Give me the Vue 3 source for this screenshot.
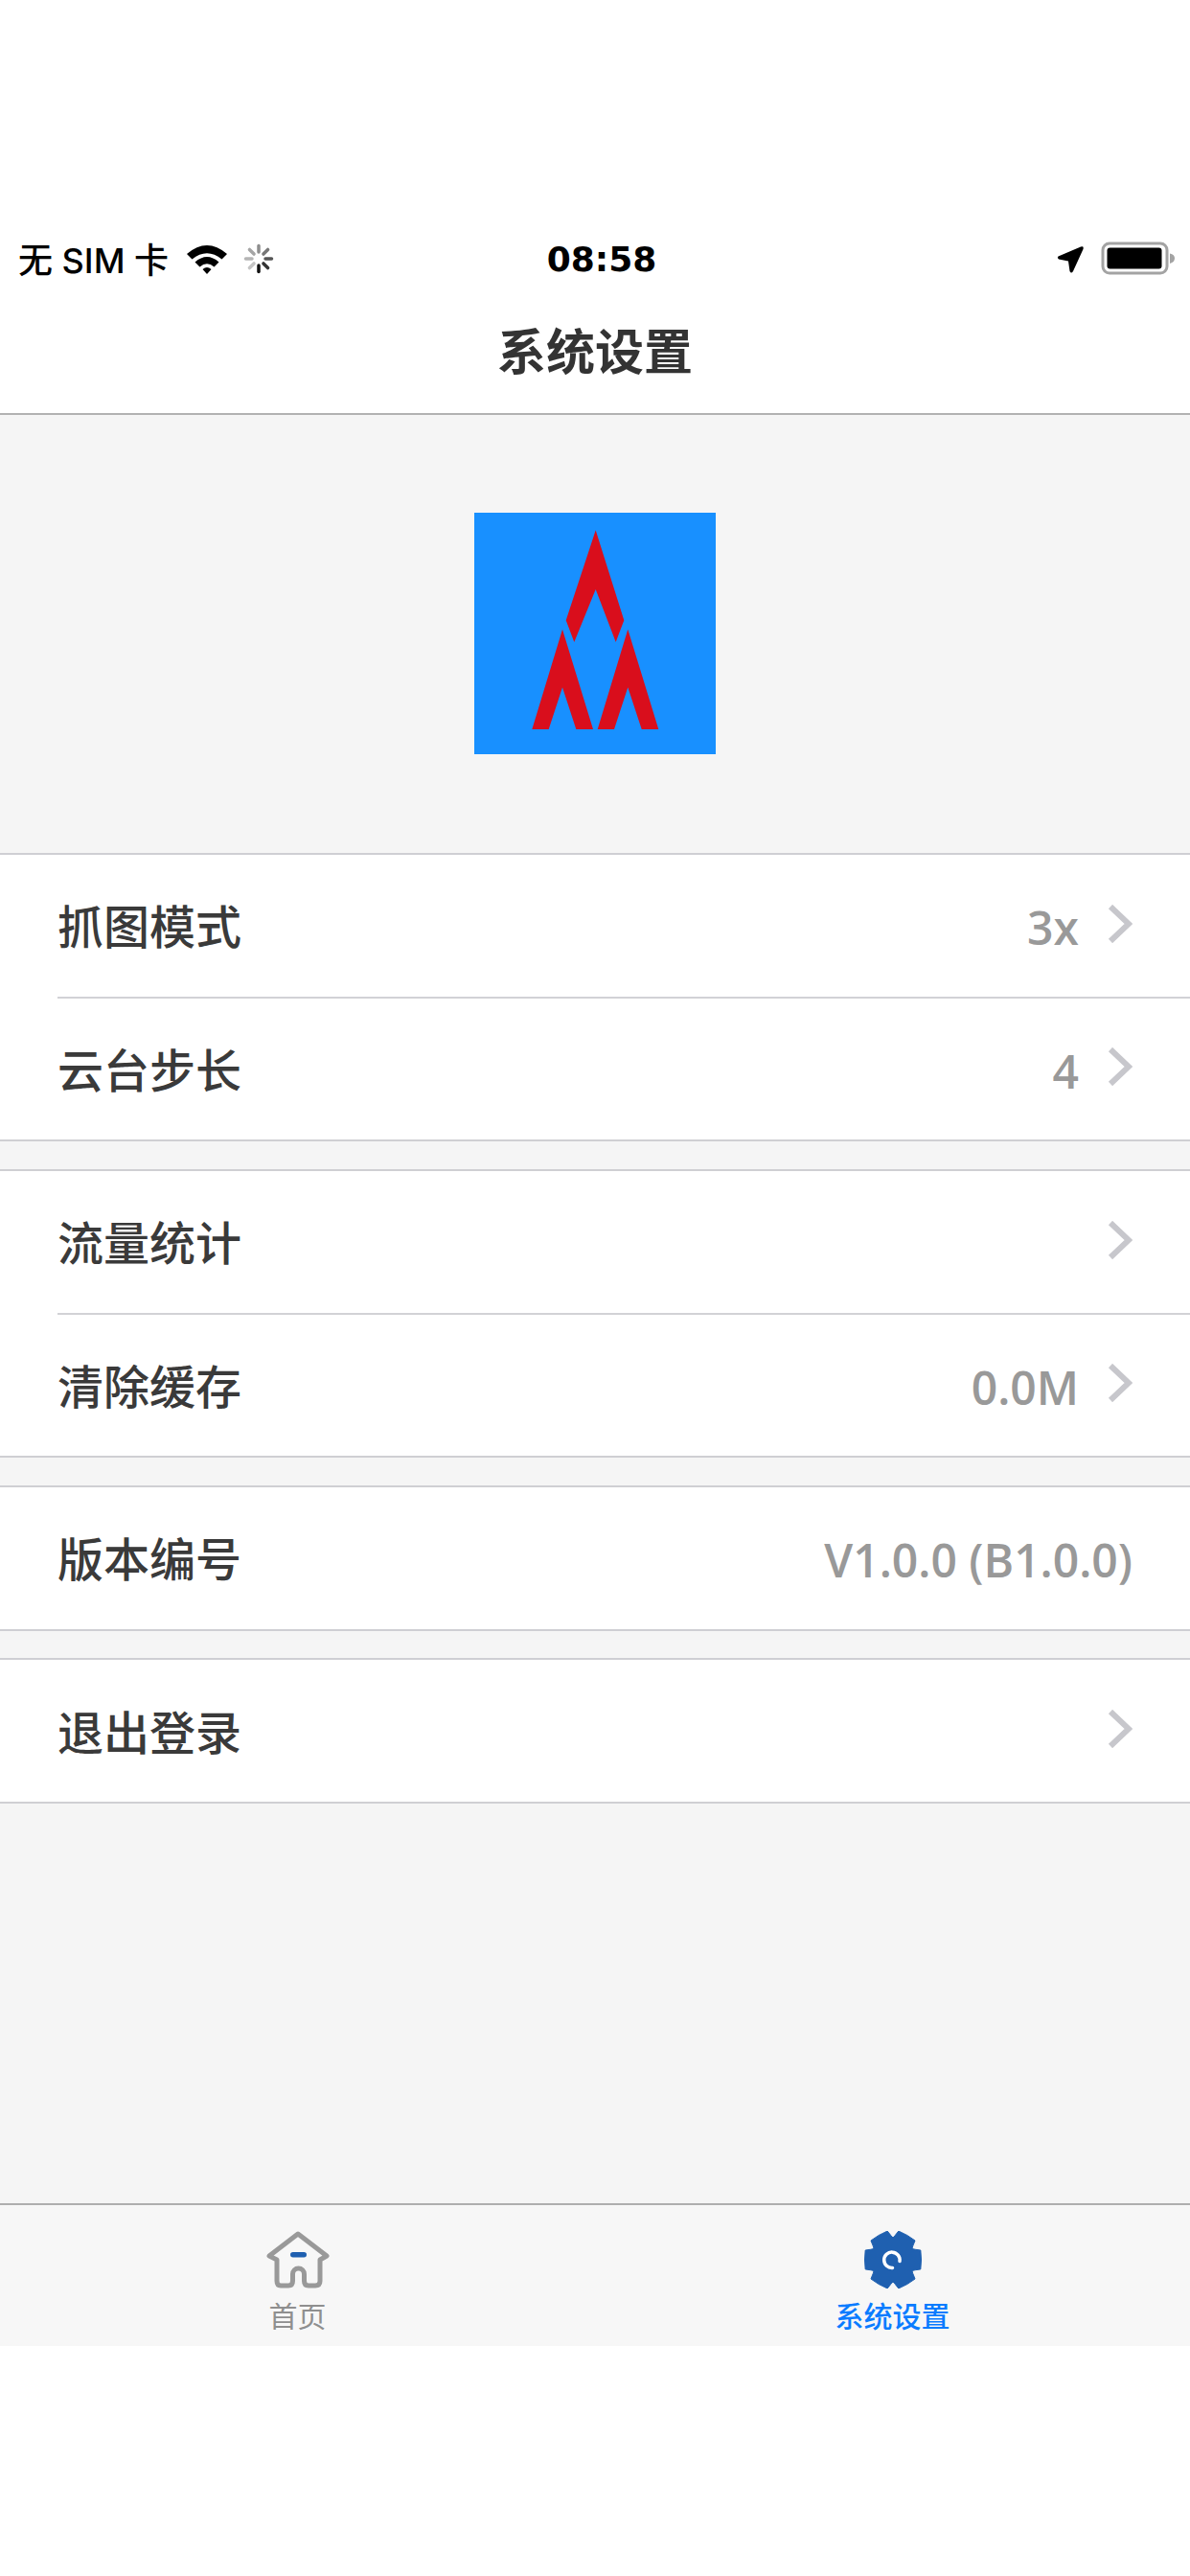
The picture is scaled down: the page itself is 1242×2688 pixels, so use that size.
<script setup>
import { computed } from "vue"

const groups = [
  [
    { label: "抓图模式", value: "3x", arrow: true },
    { label: "云台步长", value: "4", arrow: true },
  ],
  [
    { label: "流量统计", value: "", arrow: true },
    { label: "清除缓存", value: "0.0M", arrow: true },
  ],
  [{ label: "版本编号", value: "V1.0.0 (B1.0.0)", arrow: false }],
  [{ label: "退出登录", value: "", arrow: true }],
]

const spokes = [
  { angle: 180, color: "#111" },
  { angle: 135, color: "#333" },
  { angle: 90, color: "#555" },
  { angle: 45, color: "#777" },
  { angle: 0, color: "#8e8e8e" },
  { angle: -45, color: "#a5a5a5" },
  { angle: -90, color: "#b5b5b5" },
  { angle: -135, color: "#c4c4c4" },
]

// six flat teeth, one pointing right, narrow notches between them
const gearPath = computed(() => {
  const pts = []
  for (let i = 0; i < 6; i++) {
    const a = (i * Math.PI) / 3
    for (const [r, d] of [[23, -30], [25.500, -25], [30.500, -19], [29.500, 0], [30.500, 19], [25.500, 25]]) {
      const t = a + (d * Math.PI) / 180
      pts.push(`${(31 + r * Math.cos(t)).toFixed(2)} ${(30 + r * Math.sin(t)).toFixed(2)}`)
    }
  }
  return "M" + pts.join("L") + "Z"
})
</script>

<template>
  <div class="screen">
    <div class="status">
      <span class="carrier">无 SIM 卡</span>
      <svg class="wifi" width="42" height="33" viewBox="0 0 42 33">
        <path d="M0 11Q21-7 42 11L36.500 16.500Q21 4 5.500 16.500Z" />
        <path d="M8.500 19.500Q21 8.500 33.500 19.500L28.500 24.500Q21 18 13.500 24.500Z" />
        <path d="M16.500 27Q21 23 25.500 27L21 32Z" />
      </svg>
      <svg class="spinner" width="32" height="32" viewBox="0 0 32 32">
        <line
          v-for="s in spokes"
          :key="s.angle"
          x1="16"
          y1="2.500"
          x2="16"
          y2="9"
          :stroke="s.color"
          stroke-width="3.500"
          stroke-linecap="round"
          :transform="`rotate(${s.angle} 16 16)`"
        />
      </svg>
      <span class="time">08:58</span>
      <svg class="arrow-loc" width="30" height="30" viewBox="0 0 30 30">
        <path d="M1.500 12.500L25 2.500Q28.500 1.500 27.500 5L17 28Q15 31 13.500 28L12 17.500L2 15.500Q0 14 1.500 12.500Z" />
      </svg>
      <svg class="battery" width="80" height="36" viewBox="0 0 80 36">
        <rect x="2" y="2" width="67" height="31" rx="7" fill="none" stroke="#a3a3a3" stroke-width="3" />
        <rect x="6.500" y="6.500" width="57" height="22" rx="3" fill="#000" />
        <path d="M72 12.500Q77 13.500 77 17.500T72 23Z" fill="#a3a3a3" />
      </svg>
    </div>

    <header class="nav">系统设置</header>

    <main class="content">
      <div class="logo-wrap">
        <svg class="logo" width="252" height="252" viewBox="0 0 252 252">
          <rect width="252" height="252" fill="#1890ff" />
          <path fill="#d90e1c" d="M126.700 18.300L156.300 112.300L147.700 135L126.700 80L104.300 135L95.700 112.300Z" />
          <path fill="#d90e1c" d="M92 121.700L124 226L106.300 226L92 182.300L77.700 226L60.300 226Z" />
          <path fill="#d90e1c" d="M160.300 121.700L192.300 226L174.700 226L160.300 182.300L146 226L128.700 226Z" />
        </svg>
      </div>

      <section v-for="(group, i) in groups" :key="i" class="group">
        <div v-for="row in group" :key="row.label" class="row">
          <span class="label">{{ row.label }}</span>
          <span class="value" :class="{ 'value-end': !row.arrow }">{{ row.value }}</span>
          <svg v-if="row.arrow" class="chevron" width="26" height="40" viewBox="0 0 26 40">
            <path d="M3 2L22 20L3 38" fill="none" stroke="#c7c7cc" stroke-width="6" />
          </svg>
        </div>
      </section>
    </main>

    <nav class="tabs">
      <div class="tab">
        <svg width="66" height="60" viewBox="0 0 66 60">
          <path
            d="M33 3L63 26L56 30V52Q56 57 51 57H44Q39.500 57 39.500 52V45A6 6 0 0 0 27.500 45V52Q27.500 57 23 57H15Q11 57 11 52V30L3 26Z"
            fill="none"
            stroke="#999"
            stroke-width="5"
            stroke-linejoin="round"
          />
          <rect x="25" y="22" width="17" height="5.500" rx="2.750" fill="#1f60b0" />
        </svg>
        <span class="tab-label">首页</span>
      </div>
      <div class="tab tab-active">
        <svg width="62" height="60" viewBox="0 0 62 60">
          <path :d="gearPath" fill="#1f60b0" stroke="#1f60b0" stroke-width="1" stroke-linejoin="round" />
          <path
            d="M38 31.500A8.200 8.200 0 1 0 30.500 38.500"
            fill="none"
            stroke="#fff"
            stroke-width="3.500"
            stroke-linecap="round"
          />
        </svg>
        <span class="tab-label">系统设置</span>
      </div>
    </nav>

    <div class="bottom-blank"></div>
  </div>
</template>

<style scoped>
.screen {
  display: flex;
  flex-direction: column;
  height: 2688px;
  background: #fff;
  font-family: Inter, "Noto Sans CJK SC", sans-serif;
  color: #333;
}

.status {
  display: flex;
  align-items: center;
  height: 64px;
  margin-top: 238px;
  padding-left: 19px;
  position: relative;
  color: #000;
}

.carrier {
  font-size: 36px;
  font-weight: 500;
  width: 176px;
  padding-bottom: 2px;
  white-space: nowrap;
}

.wifi {
  fill: #000;
}

.spinner {
  margin-left: 17px;
}

.time {
  position: absolute;
  left: 14px;
  right: 0;
  text-align: center;
  font-family: "DejaVu Sans", sans-serif;
  font-size: 36px;
  font-weight: 700;
}

.arrow-loc {
  margin-left: auto;
  margin-right: 16px;
  fill: #000;
}

.battery {
  margin-right: 13px;
}

.nav {
  height: 131px;
  box-sizing: border-box;
  padding-bottom: 5px;
  display: flex;
  align-items: center;
  justify-content: center;
  font-size: 51px;
  font-weight: 600;
  border-bottom: 2px solid #b2b2b2;
}

.content {
  flex: 1;
  background: #f5f5f5;
}

.logo-wrap {
  display: flex;
  justify-content: center;
  padding: 102px 0 103px;
}

.logo {
  display: block;
}

.group {
  background: #fff;
  margin-bottom: 28.670px;
  border-top: 2px solid #cfcfd3;
  border-bottom: 2px solid #cfcfd3;
}

.row {
  display: flex;
  align-items: center;
  box-sizing: border-box;
  height: 147.670px;
  margin-left: 60px;
  padding-right: 60px;
}

.row + .row {
  height: 149.670px;
  border-top: 2px solid #d2d2d6;
}

.label {
  font-size: 48px;
  font-weight: 500;
  color: #3a3a3a;
  flex: 1;
  padding-bottom: 3px;
}

.value {
  font-family: "Open Sans", "Noto Sans CJK SC", sans-serif;
  font-size: 48px;
  font-weight: 600;
  color: #999;
  margin-right: 30px;
  padding-top: 4px;
}

.value-end {
  margin-right: 0;
}

.chevron {
  display: block;
  position: relative;
  top: -2px;
}

.tabs {
  display: flex;
  height: 149px;
  box-sizing: border-box;
  background: #f7f7f7;
  border-top: 2px solid #aeaeae;
}

.tab {
  flex: 1;
  display: flex;
  flex-direction: column;
  align-items: center;
  padding-top: 27px;
}

.tab svg {
  display: block;
}

.tab-label {
  font-size: 30px;
  line-height: 44px;
  color: #8f8f8f;
  margin-top: 7px;
}

.tab-active .tab-label {
  color: #0a7cff;
  font-weight: 500;
}

.bottom-blank {
  height: 240px;
}
</style>

<style>
body {
  background: #fff;
}
</style>
